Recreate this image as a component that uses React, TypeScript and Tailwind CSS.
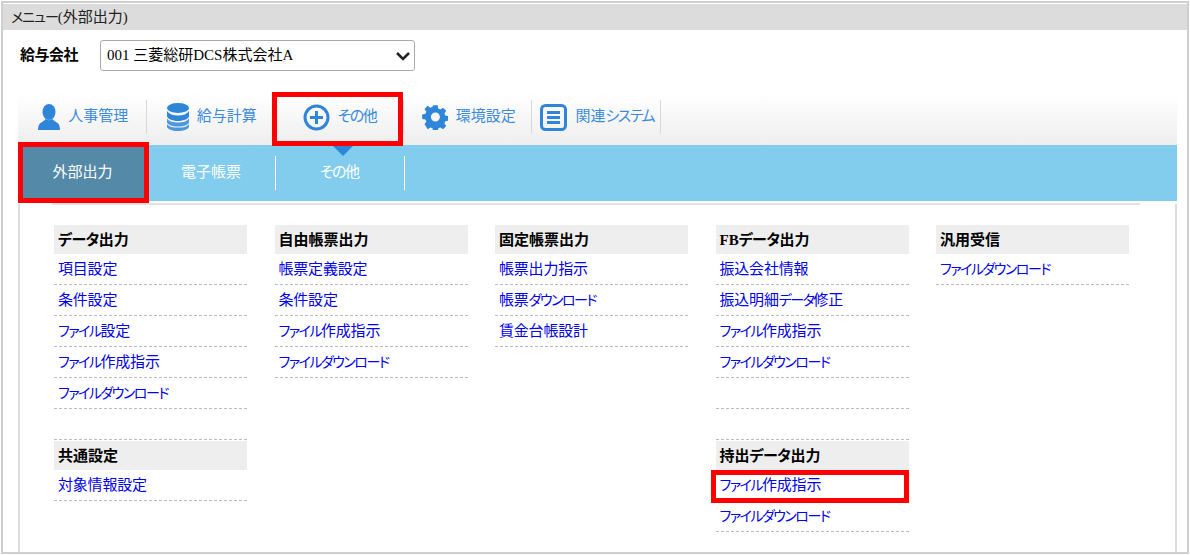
import type { ReactNode } from 'react';

const serif = "font-['Liberation_Serif','Noto_Sans_CJK_JP',serif]";

// katakana / hiragana runs are set tighter than the kanji, as in the original font
function Txt({ text, kana }: { text: string; kana: string }) {
  const parts = text.split(/([ぁ-んァ-ヶー]+)/);
  return (
    <>
      {parts.map((p, i) =>
        i % 2 === 1 ? (
          <span key={i} className={`[font-feature-settings:'palt'] ${kana}`}>{p}</span>
        ) : (
          <span key={i}>{p}</span>
        ),
      )}
    </>
  );
}

function UserIcon() {
  return (
    <svg width="22" height="26" viewBox="0 0 22 26" fill="#2f86d9">
      <ellipse cx="11" cy="8" rx="6.500" ry="8" />
      <path d="M7.500 15c-1 2.500-6 3-7 7-.4 2-.5 4-.5 4h22s-.1-2-.5-4c-1-4-6-4.500-7-7-2 1.500-5 1.500-7 0z" />
    </svg>
  );
}

function DbIcon() {
  return (
    <svg width="22" height="28" viewBox="0 0 22 28" fill="#2f86d9">
      <ellipse cx="11" cy="5" rx="11" ry="5" />
      <path d="M0 8c2 3 6 4.500 11 4.500S20 11 22 8v5c0 2.500-5 5-11 5S0 15.500 0 13z" />
      <path d="M0 15.500c2 3 6 4 11 4s9-1 11-4V19c0 2.500-5 4.500-11 4.500S0 21.500 0 19z" opacity=".85" />
      <path d="M0 21c2 3 6 3.500 11 3.500S20 24 22 21v2.500c0 2.500-5 4.500-11 4.500S0 26 0 23.500z" opacity=".85" />
    </svg>
  );
}

function PlusIcon() {
  return (
    <svg width="27" height="27" viewBox="0 0 27 27" fill="none" stroke="#2f86d9">
      <circle cx="13.5" cy="13.5" r="11.500" strokeWidth="3" />
      <path d="M13.500 7v13M7 13.500h13" strokeWidth="3" />
    </svg>
  );
}

function GearIcon() {
  return (
    <svg width="26" height="26" viewBox="0 0 26 26" fill="#2f86d9">
      <path
        fillRule="evenodd"
        d="M10.500 0h5l.7 3.600 2.300 1 3-2 3.500 3.500-2 3 1 2.300 3.600.7v5l-3.600.7-1 2.300 2 3-3.500 3.500-3-2-2.300 1-.7 3.600h-5l-.7-3.600-2.300-1-3 2L.9 21.100l2-3-1-2.300L-1.700 15.100v-5l3.600-.7 1-2.300-2-3L4.400 .6l3 2 2.300-1zM13 8a5 5 0 1 0 0 10 5 5 0 0 0 0-10z"
        transform="translate(1.700 1.300) scale(.9)"
      />
    </svg>
  );
}

function ListIcon() {
  return (
    <svg width="27" height="27" viewBox="0 0 27 27" fill="none">
      <rect x="1.500" y="1.500" width="24" height="24" rx="4" stroke="#2f86d9" strokeWidth="3" />
      <path d="M7 8.500h13M7 13.500h13M7 18.500h13" stroke="#2f86d9" strokeWidth="3" />
    </svg>
  );
}

const navItems: { label: string; icon: ReactNode }[] = [
  { label: '人事管理', icon: <UserIcon /> },
  { label: '給与計算', icon: <DbIcon /> },
  { label: 'その他', icon: <PlusIcon /> },
  { label: '環境設定', icon: <GearIcon /> },
  { label: '関連システム', icon: <ListIcon /> },
];

type Block = { title: string; rows: string[]; topLine?: boolean };

const columns: Block[][] = [
  [
    { title: 'データ出力', rows: ['項目設定', '条件設定', 'ファイル設定', 'ファイル作成指示', 'ファイルダウンロード'] },
    { title: '共通設定', rows: ['対象情報設定'], topLine: true },
  ],
  [{ title: '自由帳票出力', rows: ['帳票定義設定', '条件設定', 'ファイル作成指示', 'ファイルダウンロード'] }],
  [{ title: '固定帳票出力', rows: ['帳票出力指示', '帳票ダウンロード', '賃金台帳設計'] }],
  [
    { title: 'FBデータ出力', rows: ['振込会社情報', '振込明細データ修正', 'ファイル作成指示', 'ファイルダウンロード', ''] },
    { title: '持出データ出力', rows: ['ファイル作成指示', 'ファイルダウンロード'], topLine: true },
  ],
  [{ title: '汎用受信', rows: ['ファイルダウンロード'] }],
];

export default function App() {
  return (
    <div className={`relative w-[1190px] h-[555px] overflow-hidden bg-white ${serif}`}>
      <div className="m-px w-[1188px] h-[553px] border-2 border-[#cfcfcf] pt-px flex flex-col">
        <div className="h-[26px] bg-[#dcdcdc] pl-2 flex items-center text-[15px] text-[#222] shrink-0">
          <span><Txt text="メニュー(外部出力)" kana="text-[14px] tracking-[-1px]" /></span>
        </div>
        <div className="flex items-start h-[63px] pl-[17px] pt-[10px] shrink-0">
          <span className="w-[80px] h-[31px] flex items-center font-bold text-[15px] text-black tracking-[-0.500px]">給与会社</span>
          <div className="w-[315px] h-[31px] rounded-[3px] border border-[#aaa] flex items-center justify-between pl-[6px] pr-[3px] text-[15px] text-black">
            <span>001 三菱総研DCS株式会社A</span>
            <svg width="16" height="10" viewBox="0 0 16 10" fill="none" stroke="#222" strokeWidth="2.500">
              <path d="M2 2l6 6 6-6" />
            </svg>
          </div>
        </div>
        <div className="ml-[15px] mr-[10px] flex flex-col flex-1 min-h-0 font-['Noto_Sans_CJK_JP',sans-serif]">
          <nav className="h-[52px] pb-[4px] flex items-center bg-gradient-to-b from-white to-[#eeeeee] shrink-0">
            {navItems.map((it) => (
              <div key={it.label} className="w-[128.500px] h-[34px] pl-[3px] flex items-center justify-center gap-[8px] border-r border-[#d8d8d8] text-[15px] text-[#3b8bdc]">
                {it.icon}
                <span className="mb-[4px]"><Txt text={it.label} kana="tracking-[-1.500px]" /></span>
              </div>
            ))}
          </nav>
          <div className="h-[56px] bg-[#82cdee] flex items-center shrink-0 text-white text-[15px]">
            <div className="w-[129px] h-[56px] bg-[#548aa7] flex items-center justify-center"><span className="mb-[3px]">外部出力</span></div>
            <div className="w-[129px] h-[34px] flex items-center justify-center border-r border-white"><span className="mb-[3px]">電子帳票</span></div>
            <div className="w-[129px] h-[34px] flex items-center justify-center border-r border-white">
              <span className="mb-[3px]"><Txt text="その他" kana="tracking-[-1.500px]" /></span>
            </div>
          </div>
          <div className="flex-1 min-h-0 mt-[3px] border-l-2 border-r-2 border-[#dcdcdc] pl-[32px]">
            <div className="border-t-2 border-[#e2e2e2] mr-[35px] -mt-[1px] pl-[2px] pt-[20px] flex gap-[27.500px]">
              {columns.map((col) => (
                <div key={col[0].title} className="w-[193px] flex flex-col gap-[30px]">
                  {col.map((b) => (
                    <div key={b.title} className={b.topLine ? 'border-t border-dashed border-[#bbb] pt-px' : ''}>
                      <div className={`h-[29px] bg-[#eeeeee] pl-[4px] flex items-center font-bold text-[15px] text-black ${serif}`}>
                        <span className="mt-[1px]"><Txt text={b.title} kana="tracking-[-0.500px]" /></span>
                      </div>
                      {b.rows.map((r, i) => (
                        <div key={i} className="h-[31px] pl-[4px] flex items-center border-b border-dashed border-[#bbb] text-[15px] text-[#0000ee] tracking-[-0.200px]">
                          <span className="mb-[1px]"><Txt text={r} kana="text-[14px] tracking-[-1.500px]" /></span>
                        </div>
                      ))}
                    </div>
                  ))}
                </div>
              ))}
            </div>
          </div>
        </div>
      </div>
      {/* annotation boxes */}
      <div className="absolute left-[272px] top-[92px] w-[131px] h-[54px] border-[5px] border-[#ff0000]" />
      <div className="absolute left-[18px] top-[142px] w-[131px] h-[61px] border-[5px] border-[#ff0000]" />
      <div className="absolute left-[711px] top-[470px] w-[198px] h-[33px] border-[5px] border-[#ff0000]" />
      <div className="absolute left-[333px] top-[146px] w-0 h-0 border-x-[10px] border-x-transparent border-t-[10px] border-t-[#2f86d9]" />
    </div>
  );
}
